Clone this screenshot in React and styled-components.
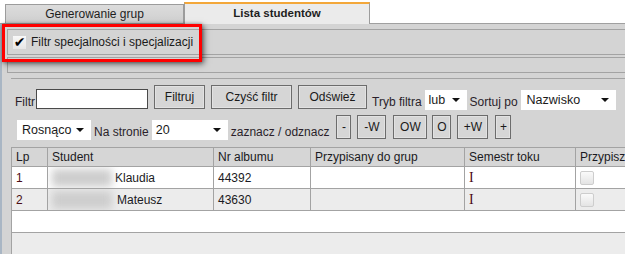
import styled, { createGlobalStyle } from "styled-components";

const GlobalStyle = createGlobalStyle`
  body {
    margin: 0;
    font-family: "Liberation Sans", Arial, sans-serif;
    font-size: 12px;
    color: #2a1f2a;
  }
`;

const Page = styled.div`
  position: relative;
  width: 625px;
  height: 254px;
  overflow: hidden;
  background: #ffffff;
  display: flex;
  flex-direction: column;
`;

const TabBar = styled.div`
  height: 23px;
  display: flex;
  align-items: flex-end;
  padding-left: 5px;
  border-bottom: 1px solid #a0a0a0;
`;

const Tab = styled.div`
  box-sizing: border-box;
  width: ${(p) => (p.active ? "186px" : "179px")};
  height: ${(p) => (p.active ? "22px" : "19px")};
  margin-bottom: ${(p) => (p.active ? "-1px" : "0")};
  display: flex;
  align-items: center;
  justify-content: center;
  border: 1px solid #9c9c9c;
  border-bottom: none;
  border-top: ${(p) => (p.active ? "2px solid #f3a73a" : "1px solid #9c9c9c")};
  background: ${(p) =>
    p.active ? "#ebebeb" : "linear-gradient(#dcdcdc, #cfcfcf)"};
  font-weight: ${(p) => (p.active ? "bold" : "normal")};
  font-size: ${(p) => (p.active ? "11.5px" : "12px")};
  color: #1e1e1e;
  padding-bottom: ${(p) => (p.active ? "3px" : "0")};
`;

const Panel = styled.div`
  flex: 1;
  background: #d4d4d4;
  border-left: 2px solid #a9b6c4;
  padding-top: 5px;
  display: flex;
  flex-direction: column;
`;

const Bar = styled.div`
  margin-left: 5px;
  height: ${(p) => p.h}px;
  margin-top: ${(p) => p.top || 0}px;
  border: 1px solid #a3a3a3;
  border-right: none;
  display: flex;
  align-items: center;
`;

const CheckMark = styled.span`
  width: 13px;
  height: 13px;
  margin-left: 5px;
  margin-right: 5px;
  background: linear-gradient(#f8f8f8, #e6e6e6);
  display: flex;
  align-items: center;
  justify-content: center;
  font-family: "DejaVu Sans", sans-serif;
  font-size: 14px;
  line-height: 13px;
  color: #000;
`;

const BarLabel = styled.span`
  font-size: 12px;
  color: #1a1a1a;
`;

const FilterArea = styled.div`
  margin-left: 9px;
  margin-top: 5px;
  border-top: 1px solid #a3a3a3;
  padding: 6px 0 0 4px;
  display: flex;
  flex-direction: column;
  gap: 6px;
`;

const Row = styled.div`
  display: flex;
  align-items: flex-end;
  height: 24px;
  padding-left: ${(p) => p.indent || 0}px;
`;

const Label = styled.span`
  line-height: 14px;
  margin: 0 ${(p) => p.r || 3}px 0 ${(p) => p.l || 0}px;
  white-space: nowrap;
`;

const TextInput = styled.div`
  box-sizing: border-box;
  width: 112px;
  height: 20px;
  background: #fff;
  border: 1px solid #4a4a4a;
`;

const Button = styled.div`
  box-sizing: border-box;
  height: 24px;
  width: ${(p) => p.w}px;
  margin-left: ${(p) => p.l || 6}px;
  border: 1px solid #6c6c6c;
  box-shadow: inset 0 0 0 1px #e2e2e2;
  background: #d6d6d6;
  display: flex;
  align-items: center;
  justify-content: center;
  color: #1a1a1a;
  white-space: nowrap;
`;

const Select = styled.div`
  box-sizing: border-box;
  position: relative;
  width: ${(p) => p.w}px;
  height: 20px;
  margin-bottom: -1px;
  background: #fff;
  padding-left: ${(p) => p.pl || 4}px;
  display: flex;
  align-items: center;
  font-size: 12.5px;
  color: #1a1a1a;
  &::after {
    content: "";
    position: absolute;
    right: 7px;
    top: 8px;
    border-left: 4px solid transparent;
    border-right: 4px solid transparent;
    border-top: 4px solid #111;
  }
`;

const Table = styled.div`
  margin: 8px 0 0 9px;
  flex: 1;
  display: flex;
  flex-direction: column;
  border-top: 1px solid #a3a3a3;
  border-left: 1px solid #a3a3a3;
`;

const Grid = styled.div`
  display: grid;
  grid-template-columns: 36px 166px 97px 154px 111px 1fr;
  height: ${(p) => p.h}px;
  background: ${(p) => p.bg};
  border-bottom: 1px solid #a3a3a3;
`;

const Cell = styled.div`
  box-sizing: border-box;
  border-right: 1px solid #a3a3a3;
  padding-left: 4px;
  display: flex;
  align-items: center;
  color: ${(p) => (p.tone ? "#4a0c14" : "#1a1a22")};
  font-size: 12px;
  white-space: nowrap;
  overflow: hidden;
  &:last-child {
    border-right: none;
  }
`;

const Blur = styled.span`
  width: 60px;
  height: 18px;
  margin: 0 ${(p) => p.gap}px 0 0;
  background: #cdcdcd;
  filter: blur(4px);
  flex-shrink: 0;
`;

const Roman = styled.span`
  font-family: "Liberation Serif", serif;
  font-size: 14px;
  color: #4a0c14;
`;

const Tick = styled.span`
  box-sizing: border-box;
  width: 14px;
  height: 14px;
  border: 1px solid #cdcdcd;
  border-radius: 2px;
  background: linear-gradient(#fafafa, #e4e4e4);
`;

const Band = styled.div`
  height: ${(p) => p.h}px;
  flex: ${(p) => (p.fill ? 1 : "none")};
  background: ${(p) => p.bg};
  border-bottom: ${(p) => (p.fill ? "none" : "1px solid #a3a3a3")};
`;

const Annotation = styled.div`
  position: absolute;
  left: 2px;
  top: 24px;
  width: 200px;
  height: 38px;
  box-sizing: border-box;
  border: 3px solid #ff0000;
  box-shadow: 2px 2px 6px rgba(0, 0, 0, 0.55), 0 0 3px rgba(0, 0, 0, 0.3);
`;

const students = [
  { lp: 1, name: "Klaudia", gap: 3, album: "44392", bg: "#ffffff" },
  { lp: 2, name: "Mateusz", gap: 5, album: "43630", bg: "#ececec" },
];

const markButtons = [
  { t: "-", w: 15, l: 4 },
  { t: "-W", w: 29 },
  { t: "OW", w: 34, l: 7 },
  { t: "O", w: 19, l: 5 },
  { t: "+W", w: 31, l: 6 },
  { t: "+", w: 16, l: 7 },
];

export default function App() {
  return (
    <Page>
      <GlobalStyle />
      <TabBar>
        <Tab>Generowanie grup</Tab>
        <Tab active>Lista studentów</Tab>
      </TabBar>
      <Panel>
        <Bar h={24}>
          <CheckMark>✔</CheckMark>
          <BarLabel>Filtr specjalności i specjalizacji</BarLabel>
        </Bar>
        <Bar h={14} top={2} />
        <FilterArea>
          <Row>
            <Label r={1}>Filtr</Label>
            <TextInput />
            <Button w={51}>Filtruj</Button>
            <Button w={81}>Czyść filtr</Button>
            <Button w={69}>Odśwież</Button>
            <Label l={5}>Tryb filtra</Label>
            <Select w={42}>lub</Select>
            <Label l={3}>Sortuj po</Label>
            <Select w={95} pl={6}>Nazwisko</Select>
          </Row>
          <Row indent={2}>
            <Select w={74} pl={5}>Rosnąco</Select>
            <Label l={3}>Na stronie</Label>
            <Select w={76}>20</Select>
            <Label l={3}>zaznacz / odznacz</Label>
            {markButtons.map((b) => (
              <Button key={b.t} w={b.w} l={b.l}>
                {b.t}
              </Button>
            ))}
          </Row>
        </FilterArea>
        <Table>
          <Grid h={18} bg="#d6d6d6">
            <Cell>Lp</Cell>
            <Cell>Student</Cell>
            <Cell>Nr albumu</Cell>
            <Cell>Przypisany do grup</Cell>
            <Cell>Semestr toku</Cell>
            <Cell>Przypisz</Cell>
          </Grid>
          {students.map((s) => (
            <Grid key={s.lp} h={21} bg={s.bg}>
              <Cell tone>{s.lp}</Cell>
              <Cell>
                <Blur gap={s.gap} />
                {s.name}
              </Cell>
              <Cell>{s.album}</Cell>
              <Cell />
              <Cell>
                <Roman>I</Roman>
              </Cell>
              <Cell>
                <Tick />
              </Cell>
            </Grid>
          ))}
          <Band h={21} bg="#ffffff" />
          <Band fill bg="#ececec" />
        </Table>
      </Panel>
      <Annotation />
    </Page>
  );
}
